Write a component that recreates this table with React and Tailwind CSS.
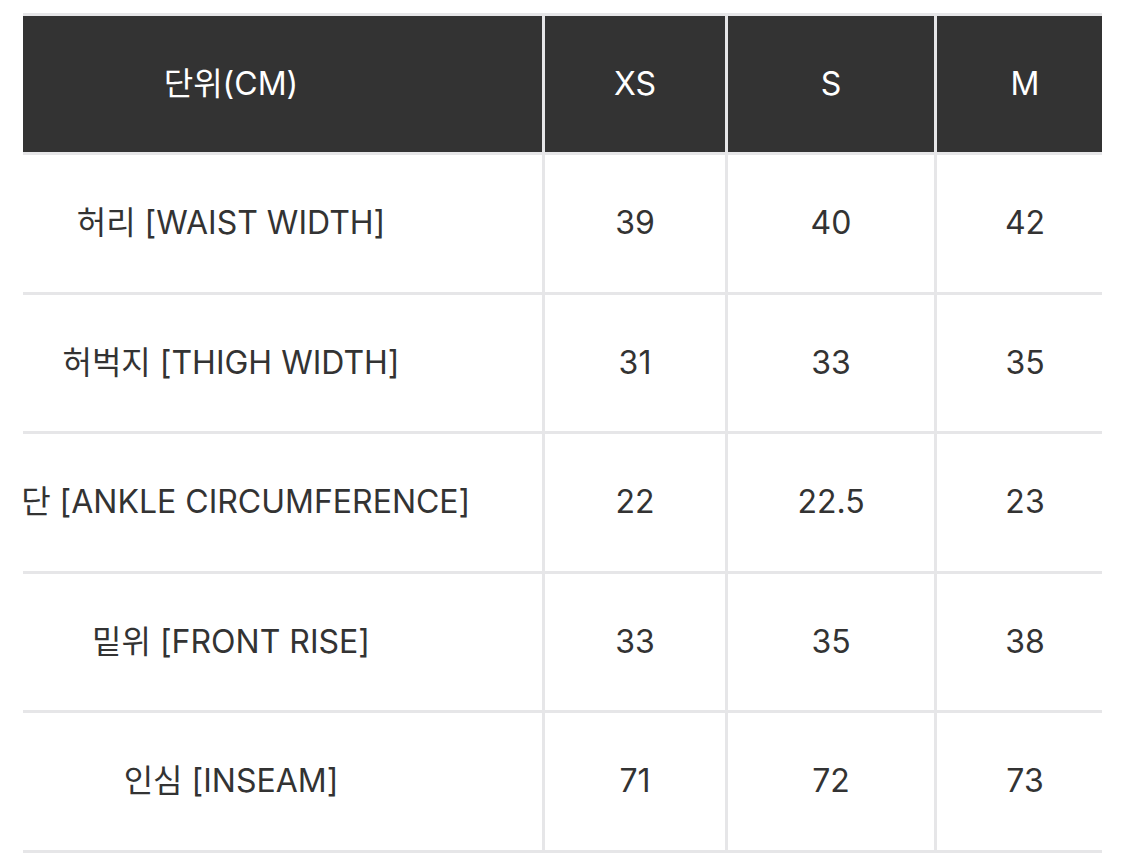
import React from "react";

const SIZES = ["XS", "S", "M"];

const ROWS = [
  { label: "허리 [WAIST WIDTH]", values: ["39", "40", "42"] },
  { label: "허벅지 [THIGH WIDTH]", values: ["31", "33", "35"] },
  { label: "밑단 [ANKLE CIRCUMFERENCE]", values: ["22", "22.5", "23"] },
  { label: "밑위 [FRONT RISE]", values: ["33", "35", "38"] },
  { label: "인심 [INSEAM]", values: ["71", "72", "73"] },
];

const font = {
  fontFamily: 'Inter, "Noto Sans CJK KR", "Noto Sans", sans-serif',
};

function HeadCell({ children }) {
  return (
    <div className="h-[136px] bg-[#333333] flex items-center justify-center text-white text-[32px]">
      {children}
    </div>
  );
}

function BodyCell({ children }) {
  return (
    <div className="h-[136.5px] bg-white flex items-center justify-center text-[#333333] text-[32px] whitespace-nowrap">
      {children}
    </div>
  );
}

export default function App() {
  return (
    <div className="w-[1125px] h-[858px] bg-white overflow-hidden" style={font}>
      <div className="ml-[23px] mt-[13px] w-[1079px] overflow-hidden">
        <div className="-ml-[103px] w-[1193px] grid grid-cols-[622px_180px_206px_176px] gap-[3px] py-[3px] bg-[#e6e6e8]">
          <HeadCell>단위(CM)</HeadCell>
          {SIZES.map((s) => (
            <HeadCell key={s}>{s}</HeadCell>
          ))}
          {ROWS.map((row) => (
            <React.Fragment key={row.label}>
              <BodyCell>{row.label}</BodyCell>
              {row.values.map((v, i) => (
                <BodyCell key={i}>{v}</BodyCell>
              ))}
            </React.Fragment>
          ))}
        </div>
      </div>
    </div>
  );
}
